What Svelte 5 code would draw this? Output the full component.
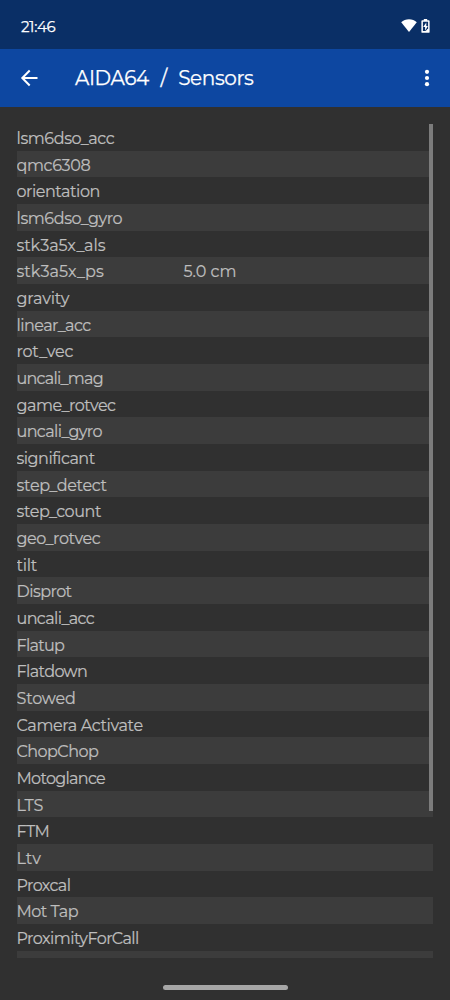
<script>
  // tracking: letter spacing in px
  const sensors = [
    { name: 'lsm6dso_acc', tracking: -0.42 },
    { name: 'qmc6308', tracking: -0.35 },
    { name: 'orientation', tracking: -0.46 },
    { name: 'lsm6dso_gyro', tracking: -0.42 },
    { name: 'stk3a5x_als', tracking: -0.1 },
    { name: 'stk3a5x_ps', tracking: 0, value: '5.0 cm' },
    { name: 'gravity', tracking: -0.1 },
    { name: 'linear_acc', tracking: -0.55 },
    { name: 'rot_vec', tracking: -0.2 },
    { name: 'uncali_mag', tracking: -0.75 },
    { name: 'game_rotvec', tracking: -0.5 },
    { name: 'uncali_gyro', tracking: -0.6 },
    { name: 'significant', tracking: -0.5 },
    { name: 'step_detect', tracking: -0.3 },
    { name: 'step_count', tracking: -0.4 },
    { name: 'geo_rotvec', tracking: -0.4 },
    { name: 'tilt', tracking: -0.25 },
    { name: 'Disprot', tracking: -0.55 },
    { name: 'uncali_acc', tracking: -0.6 },
    { name: 'Flatup', tracking: -0.7 },
    { name: 'Flatdown', tracking: -0.6 },
    { name: 'Stowed', tracking: -0.17 },
    { name: 'Camera Activate', tracking: -0.36 },
    { name: 'ChopChop', tracking: -0.55 },
    { name: 'Motoglance', tracking: -0.7 },
    { name: 'LTS', tracking: -0.1 },
    { name: 'FTM', tracking: -0.7 },
    { name: 'Ltv', tracking: 0 },
    { name: 'Proxcal', tracking: -0.6 },
    { name: 'Mot Tap', tracking: -0.5 },
    { name: 'ProximityForCall', tracking: -0.53 },
    { name: 'Moto hover end', tracking: -0.2 },
  ];
</script>

<div class="screen">
  <div class="status-bar">
    <span class="clock">21:46</span>
    <div class="status-icons">
      <svg class="wifi" viewBox="0 0 16 13" aria-hidden="true">
        <path d="M8 13 0.2 3.3C2.3 1.3 5 0.2 8 0.2s5.7 1.1 7.8 3.1z" fill="#fff" />
      </svg>
      <!-- Battery, charging -->
      <svg class="battery" viewBox="0 0 9 14" aria-hidden="true">
        <path d="M2.8 1.2V0.1h3.4v1.1h1.5q0.9 0 0.9 0.9v10.8q0 0.9-0.9 0.9H1.3q-0.9 0-0.9-0.9V2.1q0-0.9 0.9-0.9z" fill="#fff" />
        <path d="M1.9 2.8h5.2v6.4l-2.4 2.9H1.9z" fill="#0a2f66" />
        <path d="M5.3 3.6 2.2 8.1h1.9v3.6l2.8-4.8H5.3z" fill="#fff" />
      </svg>
    </div>
  </div>

  <header class="toolbar">
    <button class="back" type="button" aria-label="Back">
      <svg width="18" height="18" viewBox="0 0 18 18" aria-hidden="true">
        <path d="M17.5 9H2.5M9.7 1.5 2.3 9l7.4 7.5" fill="none" stroke="#fff" stroke-width="2" />
      </svg>
    </button>
    <h1 class="title"><span>AIDA64</span><span class="slash">/</span><span>Sensors</span></h1>
    <button class="more" type="button" aria-label="More options">
      <svg width="6" height="18" viewBox="0 0 6 18" aria-hidden="true">
        <circle cx="3" cy="2.8" r="2.1" fill="#fff" />
        <circle cx="3" cy="9" r="2.1" fill="#fff" />
        <circle cx="3" cy="15.2" r="2.1" fill="#fff" />
      </svg>
    </button>
  </header>

  <main class="list">
    {#each sensors as sensor}
      <div class="row">
        <span class="name" style="letter-spacing: {sensor.tracking}px">{sensor.name}</span>
        {#if sensor.value}
          <span class="value">{sensor.value}</span>
        {/if}
      </div>
    {/each}
    <div class="scrollbar"></div>
  </main>

  <footer class="nav-bar">
    <div class="handle"></div>
  </footer>
</div>

<style>
  :global(body) {
    margin: 0;
    background: #303030;
  }

  .screen {
    display: flex;
    flex-direction: column;
    width: 450px;
    height: 1000px;
    overflow: hidden;
    background: #303030;
    color: #bebebe;
    font-family: Montserrat, Inter, sans-serif;
  }

  .status-bar {
    display: flex;
    justify-content: space-between;
    align-items: center;
    box-sizing: border-box;
    height: 49px;
    padding: 4px 20px 0 21px;
    background: #0a2f66;
    color: #fff;
  }

  .clock {
    font-size: 15px;
    letter-spacing: -0.4px;
    -webkit-text-stroke: 0.25px currentColor;
  }

  .status-icons {
    display: flex;
    align-items: center;
    gap: 4px;
    margin-bottom: 2px;
  }

  .wifi {
    width: 16px;
    height: 13px;
  }

  .battery {
    width: 9px;
    height: 14px;
  }

  .toolbar {
    display: flex;
    align-items: center;
    box-sizing: border-box;
    height: 58px;
    padding: 0 20px;
    background: #0d47a1;
    color: #fff;
  }

  button {
    display: flex;
    padding: 0;
    border: 0;
    background: none;
  }

  .title {
    display: flex;
    flex: 1;
    margin: 0 0 0 37px;
    font-size: 20px;
    font-weight: 400;
    letter-spacing: -0.4px;
    -webkit-text-stroke: 0.25px currentColor;
  }

  .slash {
    margin: 0 11.5px;
  }

  .list {
    position: relative;
    height: 834px;
    margin: 17px 17px 0 16.5px;
    overflow: hidden;
  }

  .row {
    display: flex;
    align-items: center;
    box-sizing: border-box;
    height: 26.68px;
    padding-top: 2px;
    font-size: 16px;
    -webkit-text-stroke: 0.2px currentColor;
  }

  .row:nth-child(even) {
    background: #3c3c3c;
  }

  .name {
    width: 167px;
    white-space: nowrap;
  }

  .scrollbar {
    position: absolute;
    top: 0;
    right: 0;
    width: 4px;
    height: 687px;
    background: #7c7c7c;
  }

  .nav-bar {
    display: flex;
    flex: 1;
    justify-content: center;
    align-items: flex-start;
    padding-top: 27px;
  }

  .handle {
    width: 125px;
    height: 5px;
    border-radius: 3px;
    background: #a6a6a6;
  }
</style>
